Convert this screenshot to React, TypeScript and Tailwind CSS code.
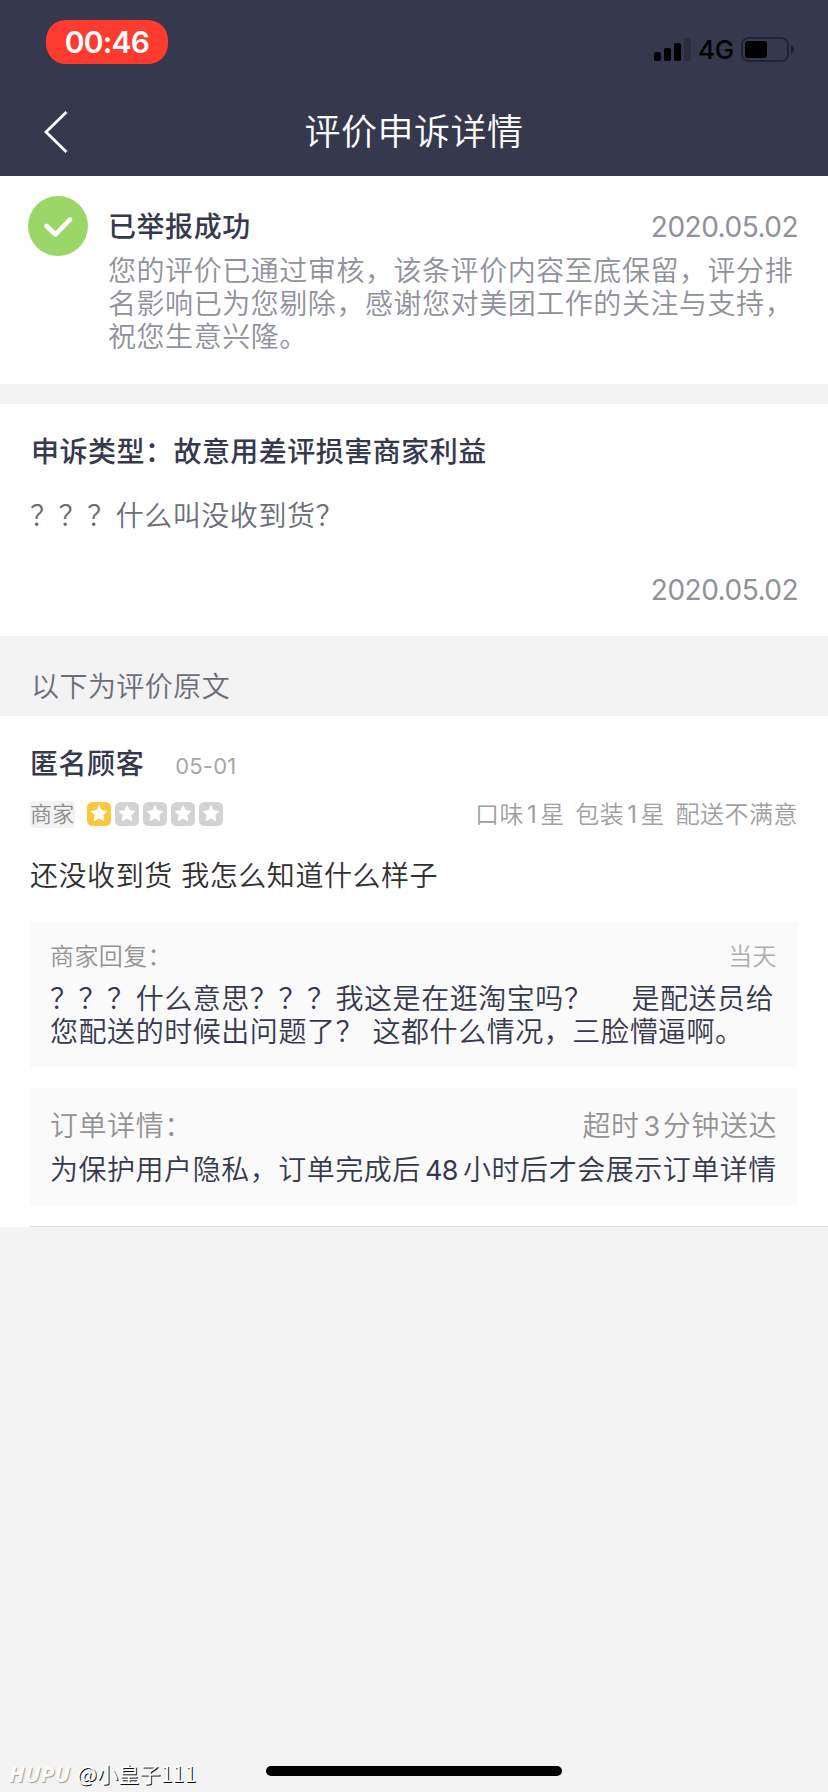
import React from "react";

const STAR =
  "M12 3.6l2.35 5.05 5.45.7-4 3.85 1 5.5L12 16.05 7.2 18.7l1-5.5-4-3.85 5.45-.7z";

function StatusBar() {
  return (
    <div className="flex h-[88px] items-start justify-between pt-5 pr-[33px] pl-[46px]">
      <div className="flex h-11 w-[122px] items-center justify-center rounded-[20px] bg-[#ff3b30] text-[30px] leading-[44px] font-semibold text-white">
        <span className="tracking-[-0.8px]">00:46</span>
      </div>
      <div className="flex items-center pt-[17px] text-black">
        <svg width="37" height="25" viewBox="0 0 37 25" fill="currentColor">
          <rect x="0" y="15" width="7" height="9" rx="1.8" />
          <rect x="10" y="11" width="7" height="13" rx="1.8" />
          <rect x="20" y="6" width="7" height="18" rx="1.8" />
          <rect x="30" y="1" width="7" height="23" rx="1.8" opacity="0.2" />
        </svg>
        <span className="ml-[7px] w-[37px] text-[26px] leading-[25px] font-medium tracking-[-0.3px]">4G</span>
        <svg className="ml-[6px]" width="54" height="25" viewBox="0 0 54 25">
          <rect x="1" y="1" width="46" height="23" rx="6.5" fill="none" stroke="#000" strokeOpacity="0.38" strokeWidth="2" />
          <rect x="4" y="4" width="22" height="17" rx="3" fill="#000" />
          <path d="M50 8c2 .6 3 2.400 3 4.500s-1 3.900-3 4.500z" fill="#000" opacity="0.4" />
        </svg>
      </div>
    </div>
  );
}

function TitleBar() {
  return (
    <div className="grid h-[88px] grid-cols-[100px_1fr_100px] items-center text-white">
      <svg className="ml-[43px]" width="26" height="44" viewBox="0 0 26 44" fill="none" stroke="currentColor" strokeWidth="2.8">
        <path d="M23.500 2L3 22l20.500 20" />
      </svg>
      <h1 className="text-center text-[36px] leading-[52px] font-[350] tracking-[0.5px]">评价申诉详情</h1>
    </div>
  );
}

function Stars({ value }: { value: number }) {
  return (
    <div className="flex gap-1">
      {[1, 2, 3, 4, 5].map((n) => (
        <svg key={n} width="24" height="24" viewBox="0 0 24 24">
          <rect width="24" height="24" rx="5.5" fill={n <= value ? "#f9c83c" : "#d3d3d3"} />
          <path d={STAR} fill="#fff" stroke="#fff" strokeWidth="1" strokeLinejoin="round" />
        </svg>
      ))}
    </div>
  );
}

export default function App() {
  return (
    <div
      lang="zh-CN"
      className="flex h-[1792px] w-[828px] flex-col overflow-hidden bg-[#f3f3f3] font-['Inter','Noto_Sans_CJK_SC',sans-serif] text-[28px] leading-[33px] font-[350] tracking-[0.55px] whitespace-nowrap text-[#36394d]"
    >
      <header className="h-[176px] bg-[#36394d]">
        <StatusBar />
        <TitleBar />
      </header>

      <section className="flex h-[208px] bg-white pt-5 pr-[30px] pl-7">
        <svg className="shrink-0" width="60" height="60" viewBox="0 0 60 60">
          <circle cx="30" cy="30" r="30" fill="#9bd768" />
          <path d="M18.500 30l9 8.500L42 23.500" fill="none" stroke="#fff" strokeWidth="4.600" strokeLinecap="round" strokeLinejoin="round" />
        </svg>
        <div className="ml-5 flex-1 pt-[15px]">
          <div className="flex justify-between">
            <h2 className="font-medium">已举报成功</h2>
            <span className="font-normal tracking-[-0.5px] text-[#8f919c]">2020.05.02</span>
          </div>
          <p className="mt-[11px] text-[#8f919c]">
            您的评价已通过审核，该条评价内容至底保留，评分排
            <br />
            名影响已为您剔除，感谢您对美团工作的关注与支持，
            <br />
            祝您生意兴隆。
          </p>
        </div>
      </section>

      <section className="mt-5 h-[232px] bg-white px-[30px] pt-[32px]">
        <h2 className="pl-px font-medium tracking-[0.48px]">申诉类型：故意用差评损害商家利益</h2>
        <p className="mt-[31px] text-[#6b6d79]">？？？什么叫没收到货？</p>
        <div className="mt-[41px] text-right font-normal tracking-[-0.5px] text-[#8f919c]">2020.05.02</div>
      </section>

      <div className="h-20 pt-[35px] pl-[31px] tracking-[0.45px] text-[#6b6d79]">以下为评价原文</div>

      <section className="h-[511px] bg-white px-[30px] pt-[32px]">
        <div className="flex">
          <h2 className="font-medium">匿名顾客</h2>
          <span className="ml-[31px] pt-[2px] text-[22px] font-normal tracking-[0.2px] text-[#a6a6a6]">05-01</span>
        </div>
        <div className="mt-[19px] flex h-[27px] items-center">
          <span className="mb-[3px] h-[27px] w-[45px] rounded-[4px] bg-[#f3f3f3] text-[22px] leading-[27px] tracking-[0.2px] text-[#8e8e8e]">商家</span>
          <div className="mb-[4px] ml-3">
            <Stars value={1} />
          </div>
          <div className="mb-[3px] ml-auto flex gap-[10.5px] text-[24px] tracking-[0.5px] text-[#a0a0a0]">
            <span>
              口味<span className="mx-[3px] font-normal">1</span>星
            </span>
            <span>
              包装<span className="mx-[3px] font-normal">1</span>星
            </span>
            <span>配送不满意</span>
          </div>
        </div>
        <p className="mt-[31px] text-[#303030]">还没收到货 我怎么知道什么样子</p>

        <div className="mt-[29px] h-[145px] bg-[#fafafa] pt-[18px] pr-[21px] pl-5">
          <div className="flex justify-between text-[24px] tracking-[0.4px]">
            <span className="text-[#939393]">商家回复：</span>
            <span className="text-[#adadad]">当天</span>
          </div>
          <p className="mt-[10px]">
            ？？？什么意思？？？我这是在逛淘宝吗？<span className="inline-block w-[39px]" />是配送员给
            <br />
            您配送的时候出问题了？ 这都什么情况，三脸懵逼啊。
          </p>
        </div>

        <div className="mt-[21px] h-[117px] bg-[#fafafa] pt-[22px] pr-[21px] pl-5">
          <div className="flex justify-between text-[#939393]">
            <span>订单详情：</span>
            <span>
              超时<span className="mr-[2px] ml-[4px] text-[27px] font-normal">3</span>分钟送达
            </span>
          </div>
          <p className="mt-[11px] tracking-[0.53px]">
            为保护用户隐私，订单完成后<span className="mr-[5px] ml-[4px] text-[27px] font-normal tracking-[-0.5px]">48</span>小时后才会展示订单详情
          </p>
        </div>
        <div className="mt-[21px] -mr-[30px] h-px bg-[#dedede]" />
      </section>

      <footer className="mt-auto flex h-[48px] items-start pl-[9px]">
        <div className="flex w-[257px] items-center pt-[13px] text-[21px] leading-[33px] text-[#f7f7f7]">
          <span className="w-[62px] font-['Open_Sans',sans-serif] text-[22px] font-bold tracking-[0.5px] text-[#fcfcfc] italic [text-shadow:1px_1px_1px_#999]">HUPU</span>
          <span className="ml-[6px] font-['Noto_Sans_CJK_SC',sans-serif] font-normal tracking-[0.2px] text-white [text-shadow:1px_1px_0_#111]">@小皇子111</span>
        </div>
        <div className="mt-[22px] h-[10px] w-[296px] rounded-full bg-black" />
      </footer>
    </div>
  );
}
